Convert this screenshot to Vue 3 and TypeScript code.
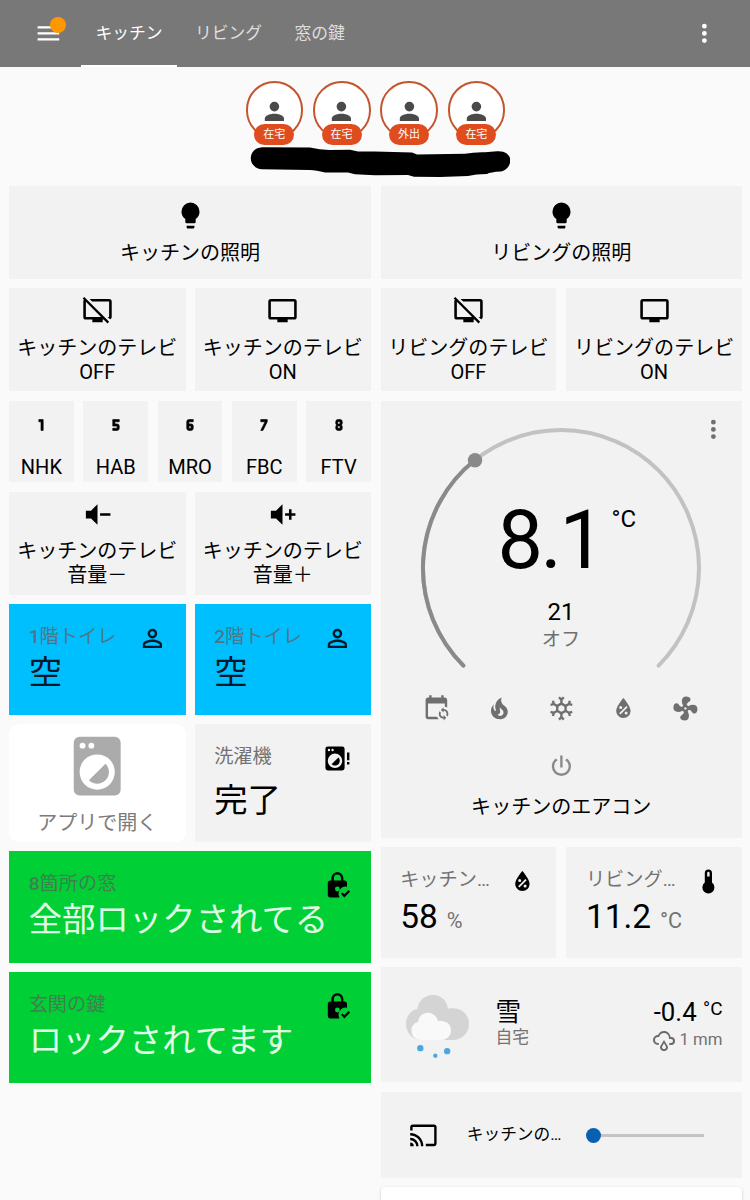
<script setup lang="ts">
const lockBody =
  'M12 1C9.24 1 7 3.24 7 6V8H6C4.9 8 4 8.9 4 10V20C4 21.1 4.9 22 6 22H13.81A6 6 0 0 1 20 13.09V10C20 8.9 19.1 8 18 8H17V6C17 3.24 14.76 1 12 1M12 3C13.66 3 15 4.34 15 6V8H9V6C9 4.34 10.34 3 12 3M12 13A2 2 0 0 1 12 17A2 2 0 0 1 12 13M21.34 15.84L17.75 19.43L16.16 17.84L15 19L17.75 22L22.5 17.25Z'

const icons: Record<string, string> = {
  menu: 'M3,6H21V8H3V6M3,11H21V13H3V11M3,16H21V18H3V16Z',
  dots: 'M12,16A2,2 0 0,1 14,18A2,2 0 0,1 12,20A2,2 0 0,1 10,18A2,2 0 0,1 12,16M12,10A2,2 0 0,1 14,12A2,2 0 0,1 12,14A2,2 0 0,1 10,12A2,2 0 0,1 12,10M12,4A2,2 0 0,1 14,6A2,2 0 0,1 12,8A2,2 0 0,1 10,6A2,2 0 0,1 12,4Z',
  account: 'M12,4A4,4 0 0,1 16,8A4,4 0 0,1 12,12A4,4 0 0,1 8,8A4,4 0 0,1 12,4M12,14C16.42,14 20,15.79 20,18V20H4V18C4,15.79 7.58,14 12,14Z',
  accountOutline: 'M12,4A4,4 0 0,1 16,8A4,4 0 0,1 12,12A4,4 0 0,1 8,8A4,4 0 0,1 12,4M12,6A2,2 0 0,0 10,8A2,2 0 0,0 12,10A2,2 0 0,0 14,8A2,2 0 0,0 12,6M12,13C14.67,13 20,14.33 20,17V20H4V17C4,14.33 9.33,13 12,13M12,14.9C9.03,14.9 5.9,16.36 5.9,17V18.1H18.1V17C18.1,16.36 14.97,14.9 12,14.9Z',
  bulb: 'M12,2A7,7 0 0,0 5,9C5,11.38 6.19,13.47 8,14.74V17A1,1 0 0,0 9,18H15A1,1 0 0,0 16,17V14.74C17.81,13.47 19,11.38 19,9A7,7 0 0,0 12,2M9,21A1,1 0 0,0 10,22H14A1,1 0 0,0 15,21V20H9V21Z',
  tv: 'M21,17H3V5H21M21,3H3A2,2 0 0,0 1,5V17A2,2 0 0,0 3,19H8V21H16V19H21A2,2 0 0,0 23,17V5A2,2 0 0,0 21,3Z',
  tvOff: 'M0.5,2.77L1.78,1.5L21,20.72L19.73,22L16.73,19H16V21H8V19H3A2,2 0 0,1 1,17V5C1,4.5 1.17,4.07 1.5,3.73L0.5,2.77M21,17V5H7.82L5.82,3H21A2,2 0 0,1 23,5V17C23,17.85 22.45,18.59 21.7,18.87L19.82,17H21M3,17H14.73L3,5.27V17Z',
  volMinus: 'M3,9H7L12,4V20L7,15H3V9M14,11H22V13H14V11Z',
  volPlus: 'M3,9H7L12,4V20L7,15H3V9M14,11H17V8H19V11H22V13H19V16H17V13H14V11Z',
  n1: 'M14,7V17H12V9H10V7H14Z',
  n5: 'M15,7H9V13H13V15H9V17H13A2,2 0 0,0 15,15V13A2,2 0 0,0 13,11H11V9H15V7Z',
  n6: 'M11,7A2,2 0 0,0 9,9V15A2,2 0 0,0 11,17H13A2,2 0 0,0 15,15V13A2,2 0 0,0 13,11H11V9H15V7H11M11,13H13V15H11V13Z',
  n7: 'M11,17L15,9V7H9V9H13L9,17H11Z',
  n8: 'M11,13H13V15H11M11,9H13V11H11M11,17H13A2,2 0 0,0 15,15V13.5A1.5,1.5 0 0,0 13.5,12A1.5,1.5 0 0,0 15,10.5V9A2,2 0 0,0 13,7H11A2,2 0 0,0 9,9V10.5A1.5,1.5 0 0,0 10.5,12A1.5,1.5 0 0,0 9,13.5V15A2,2 0 0,0 11,17Z',
  washer: 'M14.83,11.17C16.39,12.73 16.39,15.26 14.83,16.83C13.26,18.39 10.73,18.39 9.17,16.83L14.83,11.17M6,2H18A2,2 0 0,1 20,4V20A2,2 0 0,1 18,22H6A2,2 0 0,1 4,20V4A2,2 0 0,1 6,2M7,4A1,1 0 0,0 6,5A1,1 0 0,0 7,6A1,1 0 0,0 8,5A1,1 0 0,0 7,4M10,4A1,1 0 0,0 9,5A1,1 0 0,0 10,6A1,1 0 0,0 11,5A1,1 0 0,0 10,4M12,8A6,6 0 0,0 6,14A6,6 0 0,0 12,20A6,6 0 0,0 18,14A6,6 0 0,0 12,8Z',
  washerAlert: 'M12.83,11.17C14.39,12.73 14.39,15.26 12.83,16.83C11.26,18.39 8.73,18.39 7.17,16.83L12.83,11.17M4,2H16A2,2 0 0,1 18,4V20A2,2 0 0,1 16,22H4A2,2 0 0,1 2,20V4A2,2 0 0,1 4,2M5,4A1,1 0 0,0 4,5A1,1 0 0,0 5,6A1,1 0 0,0 6,5A1,1 0 0,0 5,4M8,4A1,1 0 0,0 7,5A1,1 0 0,0 8,6A1,1 0 0,0 9,5A1,1 0 0,0 8,4M10,8A6,6 0 0,0 4,14A6,6 0 0,0 10,20A6,6 0 0,0 16,14A6,6 0 0,0 10,8M20,7H22V13.5H20V7M20,15H22V17H20V15Z',
  lock: lockBody,
  calendarSync: 'M18 11V12.5C21.19 12.5 23.09 16.05 21.33 18.71L20.24 17.62C21.06 15.96 19.85 14 18 14V15.5L15.75 13.25L18 11M18 22V20.5C14.81 20.5 12.91 16.95 14.67 14.29L15.76 15.38C14.94 17.04 16.15 19 18 19V17.5L20.25 19.75L18 22M19 3H18V1H16V3H8V1H6V3H5C3.89 3 3 3.9 3 5V19C3 20.11 3.9 21 5 21H14C13.36 20.45 12.86 19.77 12.5 19H5V8H19V10.59C19.71 10.7 20.39 10.94 21 11.31V5C21 3.9 20.11 3 19 3Z',
  fire: 'M17.66 11.2C17.43 10.9 17.15 10.64 16.89 10.38C16.22 9.78 15.46 9.35 14.82 8.72C13.33 7.26 13 4.85 13.95 3C13 3.23 12.17 3.75 11.46 4.32C8.87 6.4 7.85 10.07 9.07 13.22C9.11 13.32 9.15 13.42 9.15 13.55C9.15 13.77 9 13.97 8.8 14.05C8.57 14.15 8.33 14.09 8.14 13.93C8.08 13.88 8.04 13.83 8 13.76C6.87 12.33 6.69 10.28 7.45 8.64C5.78 10 4.87 12.3 5 14.47C5.06 14.97 5.12 15.47 5.29 15.97C5.43 16.57 5.7 17.17 6 17.7C7.08 19.43 8.95 20.67 10.96 20.92C13.1 21.19 15.39 20.8 17.03 19.32C18.86 17.66 19.5 15 18.56 12.72L18.43 12.46C18.22 12 17.66 11.2 17.66 11.2M14.5 17.5C14.22 17.74 13.76 18 13.4 18.1C12.28 18.5 11.16 17.94 10.5 17.28C11.69 17 12.4 16.12 12.61 15.23C12.78 14.43 12.46 13.77 12.33 13C12.21 12.26 12.23 11.63 12.5 10.94C12.69 11.32 12.89 11.7 13.13 12C13.9 13 15.11 13.44 15.37 14.8C15.41 14.94 15.43 15.08 15.43 15.23C15.46 16.05 15.1 16.95 14.5 17.5Z',
  snow: 'M20.79,13.95L18.46,14.57L16.46,13.44V10.56L18.46,9.43L20.79,10.05L21.31,8.12L19.54,7.65L20,5.88L18.07,5.36L17.45,7.69L15.45,8.82L13,7.38V5.12L14.71,3.41L13.29,2L12,3.29L10.71,2L9.29,3.41L11,5.12V7.38L8.5,8.82L6.5,7.69L5.92,5.36L4,5.88L4.47,7.65L2.7,8.12L3.22,10.05L5.55,9.43L7.55,10.56V13.45L5.55,14.58L3.22,13.96L2.7,15.89L4.47,16.36L4,18.12L5.93,18.64L6.55,16.31L8.55,15.18L11,16.62V18.88L9.29,20.59L10.71,22L12,20.71L13.29,22L14.7,20.59L13,18.88V16.62L15.5,15.17L17.5,16.3L18.12,18.63L20,18.12L19.53,16.35L21.3,15.88L20.79,13.95M9.5,10.56L12,9.11L14.5,10.56V13.44L12,14.89L9.5,13.44V10.56Z',
  humidity: 'M12,3.25C12,3.25 6,10 6,14C6,17.32 8.69,20 12,20A6,6 0 0,0 18,14C18,10 12,3.25 12,3.25M14.47,9.97L15.53,11.03L9.53,17.03L8.47,15.97M9.75,10A1.25,1.25 0 0,1 11,11.25A1.25,1.25 0 0,1 9.75,12.5A1.25,1.25 0 0,1 8.5,11.25A1.25,1.25 0 0,1 9.75,10M14.25,14.5A1.25,1.25 0 0,1 15.5,15.75A1.25,1.25 0 0,1 14.25,17A1.25,1.25 0 0,1 13,15.75A1.25,1.25 0 0,1 14.25,14.5Z',
  fan: 'M12,11A1,1 0 0,0 11,12A1,1 0 0,0 12,13A1,1 0 0,0 13,12A1,1 0 0,0 12,11M12.5,2C17,2 17.11,5.57 14.75,6.75C13.76,7.24 13.32,8.29 13.13,9.22C13.61,9.42 14.03,9.73 14.35,10.13C18.05,8.13 22.03,8.92 22.03,12.5C22.03,17 18.46,17.1 17.28,14.73C16.78,13.74 15.72,13.3 14.79,13.11C14.59,13.59 14.28,14 13.88,14.34C15.87,18.03 15.08,22 11.5,22C7,22 6.91,18.42 9.27,17.24C10.25,16.75 10.69,15.71 10.89,14.79C10.4,14.59 9.97,14.27 9.65,13.87C5.96,15.85 2,15.07 2,11.5C2,7 5.56,6.89 6.74,9.26C7.24,10.25 8.29,10.68 9.22,10.87C9.41,10.39 9.73,9.97 10.14,9.65C8.15,5.96 8.94,2 12.5,2Z',
  power: 'M16.56,5.44L15.11,6.89C16.84,7.94 18,9.83 18,12A6,6 0 0,1 12,18A6,6 0 0,1 6,12C6,9.83 7.16,7.94 8.88,6.88L7.44,5.44C5.36,6.88 4,9.28 4,12A8,8 0 0,0 12,20A8,8 0 0,0 20,12C20,9.28 18.64,6.88 16.56,5.44M13,3H11V13H13',
  thermometer: 'M15 13V5A3 3 0 0 0 9 5V13A5 5 0 1 0 15 13M12 4A1 1 0 0 1 13 5V8H11V5A1 1 0 0 1 12 4Z',
  cast: 'M1,10V12A9,9 0 0,1 10,21H12C12,14.92 7.07,10 1,10M1,14V16A5,5 0 0,1 6,21H8A7,7 0 0,0 1,14M1,18V21H4A3,3 0 0,0 1,18M21,3H3C1.89,3 1,3.89 1,5V8H3V5H21V19H14V21H21A2,2 0 0,0 23,19V5C23,3.89 22.1,3 21,3Z',
  rain: 'M6 14A1 1 0 0 1 7 15A1 1 0 0 1 6 16A5 5 0 0 1 1 11A5 5 0 0 1 6 6C7 3.65 9.3 2 12 2C15.43 2 18.24 4.66 18.5 8.03L19 8A4 4 0 0 1 23 12A4 4 0 0 1 19 16H18A1 1 0 0 1 17 15A1 1 0 0 1 18 14H19A2 2 0 0 0 21 12A2 2 0 0 0 19 10H17V9A5 5 0 0 0 12 4C9.5 4 7.45 5.82 7.06 8.19C6.73 8.07 6.37 8 6 8A3 3 0 0 0 3 11A3 3 0 0 0 6 14M14.83 15.67C16.39 17.23 16.39 19.5 14.83 21.08C14.05 21.86 13 22 12 22C11 22 9.95 21.86 9.17 21.08C7.61 19.5 7.61 17.23 9.17 15.67L12 11L14.83 15.67M13.41 16.69L12 14.25L10.59 16.69C9.8 17.5 9.8 18.7 10.59 19.5C11 19.93 11.5 20 12 20C12.5 20 13 19.93 13.41 19.5C14.2 18.7 14.2 17.5 13.41 16.69Z',
}

interface Tile {
  icon: string
  lines: string[]
}

const tabs = ['キッチン', 'リビング', '窓の鍵']
const people = ['在宅', '在宅', '外出', '在宅']
const kitchenTv: Tile[] = [
  { icon: 'tvOff', lines: ['キッチンのテレビ', 'OFF'] },
  { icon: 'tv', lines: ['キッチンのテレビ', 'ON'] },
]
const livingTv: Tile[] = [
  { icon: 'tvOff', lines: ['リビングのテレビ', 'OFF'] },
  { icon: 'tv', lines: ['リビングのテレビ', 'ON'] },
]
const channels: Tile[] = [
  { icon: 'n1', lines: ['NHK'] },
  { icon: 'n5', lines: ['HAB'] },
  { icon: 'n6', lines: ['MRO'] },
  { icon: 'n7', lines: ['FBC'] },
  { icon: 'n8', lines: ['FTV'] },
]
const volume: Tile[] = [
  { icon: 'volMinus', lines: ['キッチンのテレビ', '音量－'] },
  { icon: 'volPlus', lines: ['キッチンのテレビ', '音量＋'] },
]
const toilets = ['1', '2']
const locks = [
  { num: '8', name: '箇所の窓', state: '全部ロックされてる' },
  { num: '', name: '玄関の鍵', state: 'ロックされてます' },
]
const sensors = [
  { name: 'キッチン…', value: '58', unit: '%', icon: 'humidity' },
  { name: 'リビング…', value: '11.2', unit: '°C', icon: 'thermometer' },
]
const modes = ['calendarSync', 'fire', 'snow', 'humidity', 'fan']
</script>

<template>
  <div class="page">
    <header class="bar">
      <button class="menu" aria-label="menu">
        <svg class="icon" viewBox="0 0 24 24"><path :d="icons.menu" /></svg>
        <span class="dot"></span>
      </button>
      <nav class="tabs">
        <a v-for="(t, i) in tabs" :key="t" class="tab" :class="{ active: i === 0 }">{{ t }}</a>
      </nav>
      <svg class="icon more" viewBox="0 0 24 24"><path :d="icons.dots" /></svg>
    </header>

    <section class="people">
      <div class="badges">
        <div v-for="(p, i) in people" :key="i" class="badge">
          <svg class="icon" viewBox="0 0 24 24"><path :d="icons.account" /></svg>
          <span class="pill">{{ p }}</span>
        </div>
      </div>
      <svg class="scribble" viewBox="250 146 260 32">
        <path
          d="M262 147.3L310 147.5Q320 150 330 149.9L350 149.8L358 151.5L375 151.5L412 152.6L417 154.5L465 153.8Q474 152 485 152.3L497 151.2C514 150 514 168 501 171.5Q490 172 487 174Q476 174.2 468 176L440 177L414 176.7L408 175L375 175.2L355 174.3L348 172.4L325 172.5Q316 170.2 310 170L262 169.3C247 168 247 148.500 262 147.3Z"
        />
      </svg>
    </section>

    <main class="columns">
      <div class="col left">
        <div class="card button single">
          <svg class="icon" viewBox="0 0 24 24"><path :d="icons.bulb" /></svg>
          <span>キッチンの照明</span>
        </div>
        <div class="pair">
          <div v-for="t in kitchenTv" :key="t.icon" class="card button">
            <svg class="icon" viewBox="0 0 24 24"><path :d="icons[t.icon]" /></svg>
            <span v-for="l in t.lines" :key="l">{{ l }}</span>
          </div>
        </div>
        <div class="five">
          <div v-for="c in channels" :key="c.icon" class="card button channel">
            <svg class="icon" viewBox="0 0 24 24"><path fill-rule="evenodd" :d="icons[c.icon]" /></svg>
            <span>{{ c.lines[0] }}</span>
          </div>
        </div>
        <div class="pair">
          <div v-for="t in volume" :key="t.icon" class="card button">
            <svg class="icon" viewBox="0 0 24 24"><path :d="icons[t.icon]" /></svg>
            <span v-for="l in t.lines" :key="l">{{ l }}</span>
          </div>
        </div>
        <div class="pair">
          <div v-for="n in toilets" :key="n" class="card entity cyan">
            <div class="head">
              <span class="name"><b>{{ n }}</b>階トイレ</span>
              <svg class="icon" viewBox="0 0 24 24"><path :d="icons.accountOutline" fill-rule="evenodd" /></svg>
            </div>
            <div class="value">空</div>
          </div>
        </div>
        <div class="pair">
          <div class="card app">
            <svg class="icon" viewBox="0 0 24 24"><path :d="icons.washer" fill-rule="evenodd" /></svg>
            <span>アプリで開く</span>
          </div>
          <div class="card entity washer">
            <div class="head">
              <span class="name">洗濯機</span>
              <svg class="icon" viewBox="0 0 24 24"><path :d="icons.washerAlert" fill-rule="evenodd" /></svg>
            </div>
            <div class="value">完了</div>
          </div>
        </div>
        <div v-for="k in locks" :key="k.name" class="card entity green">
          <div class="head">
            <span class="name"><b>{{ k.num }}</b>{{ k.name }}</span>
            <svg class="icon" viewBox="0 0 24 24"><path :d="icons.lock" fill-rule="evenodd" /></svg>
          </div>
          <div class="value">{{ k.state }}</div>
        </div>
      </div>

      <div class="col right">
        <div class="card button single">
          <svg class="icon" viewBox="0 0 24 24"><path :d="icons.bulb" /></svg>
          <span>リビングの照明</span>
        </div>
        <div class="pair">
          <div v-for="t in livingTv" :key="t.icon" class="card button">
            <svg class="icon" viewBox="0 0 24 24"><path :d="icons[t.icon]" /></svg>
            <span v-for="l in t.lines" :key="l">{{ l }}</span>
          </div>
        </div>
        <div class="card thermostat">
          <svg class="icon more" viewBox="0 0 24 24"><path :d="icons.dots" /></svg>
          <svg class="dial" viewBox="-144 -144 288 256">
            <path class="track" d="M-97.600 97.600A138 138 0 1 1 97.600 97.600" />
            <path class="level" d="M-97.600 97.600A138 138 0 0 1 -86 -108" />
            <circle class="knob" cx="-86" cy="-107.700" r="7.200" />
            <text class="temp" x="-63.500" y="0">8.1</text>
            <text class="unit" x="50.500" y="-41">°C</text>
            <text class="target" x="0" y="51.500">21</text>
            <text class="mode" x="0" y="78">オフ</text>
          </svg>
          <div class="modes">
            <svg v-for="m in modes" :key="m" class="icon" viewBox="0 0 24 24">
              <path :d="icons[m]" fill-rule="evenodd" />
            </svg>
          </div>
          <svg class="icon power" viewBox="0 0 24 24"><path :d="icons.power" /></svg>
          <div class="title">キッチンのエアコン</div>
        </div>
        <div class="pair">
          <div v-for="s in sensors" :key="s.icon" class="card entity">
            <div class="head">
              <span class="name">{{ s.name }}</span>
              <svg class="icon" viewBox="0 0 24 24"><path :d="icons[s.icon]" fill-rule="evenodd" /></svg>
            </div>
            <div class="value">{{ s.value }}<small>{{ s.unit }}</small></div>
          </div>
        </div>
        <div class="card weather">
          <svg class="sky" viewBox="93 105 189 190">
            <path
              fill="#d4d4d4"
              d="M140 240C113 240 93 219 93 193C93 168 108 150 127 147C130 122 150 105 173 105C197 105 217 122 219 146C258 139 282 162 282 192C282 219 261 240 234 240Z"
            />
            <path
              fill="#f9f9f9"
              d="M138 240C121 240 109 228 109 211C109 198 117 189 129 186C131 169 143 158 158 158C173 158 186 168 188 183C212 180 228 192 228 211C228 228 216 240 199 240Z"
            />
            <g fill="#4ba8de">
              <circle cx="136" cy="264.500" r="9.500" />
              <circle cx="181" cy="287" r="6.500" />
              <circle cx="216.500" cy="273.500" r="9.500" />
            </g>
          </svg>
          <div class="cond">
            <div class="state">雪</div>
            <div class="place">自宅</div>
          </div>
          <div class="nums">
            <div class="deg">-0.4 <sup>°C</sup></div>
            <div class="mm">
              <svg viewBox="0 0 24 24"><path :d="icons.rain" fill-rule="evenodd" /></svg>
              <span>1 mm</span>
            </div>
          </div>
        </div>
        <div class="card cast">
          <svg class="icon" viewBox="0 0 24 24"><path :d="icons.cast" /></svg>
          <span class="label">キッチンの…</span>
          <div class="slider"><i class="thumb"></i></div>
        </div>
        <div class="card next"></div>
      </div>
    </main>
  </div>
</template>

<style>
html,
body {
  margin: 0;
  background: #fafafa;
}
</style>

<style scoped>
.page {
  width: 750px;
  height: 1200px;
  overflow: hidden;
  background: #fafafa;
  color: #000;
  font-family: Roboto, 'Noto Sans CJK JP', sans-serif;
  font-size: 20.05px;
  line-height: 24px;
}
.icon {
  display: block;
  flex: none;
  width: 28.8px;
  height: 28.8px;
  fill: currentColor;
}
.bar {
  box-sizing: border-box;
  display: flex;
  align-items: center;
  height: 67px;
  padding: 0 31.500px 0 33.600px;
  background: #787878;
  color: #fff;
}
.menu {
  position: relative;
  padding: 0;
  border: 0;
  background: none;
  color: inherit;
}
.dot {
  position: absolute;
  top: -2px;
  left: 16.500px;
  width: 16.400px;
  height: 16.400px;
  border-radius: 50%;
  background: #ff9800;
}
.tabs {
  display: flex;
  flex: 1;
  align-self: stretch;
  margin-left: 18.600px;
}
.tab {
  box-sizing: border-box;
  height: 67px;
  padding: 0 14.400px;
  border-bottom: 2.400px solid transparent;
  font-size: 16.8px;
  line-height: 66px;
  color: #dedede;
  margin-right: 3.600px;
}
.tab.active {
  border-color: #fff;
  color: #fff;
}
.people {
  display: flex;
  flex-direction: column;
  align-items: center;
  height: 119px;
  box-sizing: border-box;
  padding-top: 14px;
}
.badges {
  display: flex;
  gap: 9.800px;
  margin-left: 1px;
}
.badge {
  position: relative;
  box-sizing: border-box;
  width: 57.600px;
  height: 57.600px;
  border: 2px solid #c3552f;
  border-radius: 50%;
  background: #fff;
  color: #4a4a4a;
}
.badge .icon {
  margin: 14px auto 0;
}
.pill {
  position: absolute;
  top: 41px;
  left: 6.600px;
  width: 40px;
  height: 21px;
  border-radius: 10.500px;
  background: #df4c1e;
  color: #fff;
  font-size: 11px;
  line-height: 21px;
  text-align: center;
}
.scribble {
  width: 260px;
  height: 32px;
  margin: 7.400px 0 0 10px;
}
.columns {
  display: grid;
  grid-template-columns: 362px 361.500px;
  gap: 9.500px;
  padding: 0 0 0 9px;
}
.col {
  display: grid;
  gap: 9.500px;
}
.left {
  grid-template-rows: 92.800px 103px 81.500px 103px 110.500px 117.500px 111.500px 110.500px;
}
.right {
  grid-template-rows: 92.800px 103px 437px 110.600px 115px 86px 40px;
}
.pair,
.five {
  display: grid;
  grid-template-columns: 1fr 1fr;
  gap: 9px;
}
.right .pair {
  gap: 10px;
}
.five {
  grid-template-columns: repeat(5, 1fr);
  gap: 9.500px;
}
.card {
  box-sizing: border-box;
  min-width: 0;
  background: #f2f2f2;
}
.button {
  display: flex;
  flex-direction: column;
  align-items: center;
  padding-top: 7px;
  white-space: nowrap;
}
.button .icon {
  width: 31px;
  height: 31px;
  margin-bottom: 9.600px;
}
.single {
  padding-top: 14px;
}
.single .icon {
  margin-bottom: 10px;
}
.channel {
  padding-top: 11px;
}
.channel .icon {
  width: 26px;
  height: 26px;
  margin-bottom: 17.600px;
  stroke: currentColor;
  stroke-width: 0.6;
}
.entity {
  padding: 20.800px 19px 0 19.700px;
}
.head {
  display: flex;
  justify-content: space-between;
  color: #000;
}
.head .icon {
  margin: -0.800px 0 0;
}
.name {
  font-size: 19.2px;
  color: #727272;
  white-space: nowrap;
}
.name b {
  font-weight: 500;
}
.value {
  margin-top: 1.200px;
  font-size: 33.4px;
  line-height: 38px;
  white-space: nowrap;
}
.value small {
  margin-left: 9px;
  font-size: 21.6px;
  color: #727272;
}
.cyan {
  background: #00bfff;
}
.cyan .name {
  color: #48788a;
}
.cyan .icon,
.cyan .value {
  color: #06182a;
}
.green {
  background: #00d035;
}
.green .name {
  color: #3f7f50;
}
.green .value {
  color: #e0ffe6;
}
.washer .value {
  margin-top: 9px;
}
.right .value {
  margin-top: 1.500px;
}
.app {
  display: flex;
  flex-direction: column;
  align-items: center;
  border-radius: 10px;
  background: #fff;
  color: #7b7b7b;
}
.app .icon {
  width: 70.400px;
  height: 70.400px;
  margin: 7.200px 0 9.500px;
  color: #ababab;
}
.thermostat {
  position: relative;
  display: flex;
  flex-direction: column;
  align-items: center;
  color: #6f6f6f;
}
.thermostat .more {
  position: absolute;
  top: 14.200px;
  right: 14.300px;
}
.dial {
  width: 288px;
  height: 256px;
  margin-top: 23.300px;
}
.dial path {
  fill: none;
  stroke-width: 4;
  stroke-linecap: round;
}
.dial .track {
  stroke: #c2c2c2;
}
.dial .level {
  stroke: #8a8a8a;
}
.dial .knob {
  fill: #8a8a8a;
}
.dial text {
  fill: #000;
  font-size: 24px;
}
.dial .temp {
  font-size: 81px;
  letter-spacing: -2.500px;
}
.dial .target,
.dial .mode {
  text-anchor: middle;
}
.dial .mode {
  font-size: 19.2px;
  fill: #6f6f6f;
}
.modes {
  display: flex;
  gap: 33.500px;
  margin-top: 14.200px;
}
.power {
  margin-top: 28.800px;
  color: #8a8a8a;
}
.title {
  margin-top: 14.400px;
  color: #000;
}
.weather {
  display: flex;
  padding: 0 19.500px 0 25.500px;
}
.sky {
  width: 63px;
  height: 63.300px;
  margin-top: 27.500px;
}
.cond {
  flex: 1;
  padding: 29.500px 0 0 26.500px;
}
.state {
  font-size: 25.6px;
  line-height: 30px;
}
.place {
  font-size: 16.8px;
  line-height: 20px;
  color: #727272;
}
.nums {
  padding-top: 29.500px;
  text-align: right;
}
.deg {
  font-size: 25.8px;
  line-height: 30px;
}
.deg sup {
  position: relative;
  top: -6px;
  font-size: 19px;
  line-height: 0;
  vertical-align: baseline;
}
.mm {
  display: flex;
  align-items: center;
  justify-content: flex-end;
  gap: 3.500px;
  font-size: 16.8px;
  line-height: 24px;
  color: #727272;
}
.mm svg {
  width: 24px;
  height: 24px;
  margin-top: 2px;
  margin-bottom: -2px;
  fill: #6a6a6a;
}
.cast {
  display: flex;
  align-items: center;
  padding: 0.600px 38px 0 28.500px;
}
.label {
  margin-left: 29px;
  font-size: 16.7px;
  width: 98px;
  white-space: nowrap;
}
.slider {
  display: flex;
  align-items: center;
  flex: 1;
  height: 3px;
  margin-left: 28px;
  background: #c4c4c4;
}
.thumb {
  flex: none;
  width: 15px;
  height: 15px;
  margin-left: -7px;
  border-radius: 50%;
  background: #0a5fb0;
}
.next {
  border-radius: 4px;
  background: #fff;
  box-shadow: 0 1px 3px rgba(0, 0, 0, 0.22);
}
</style>
